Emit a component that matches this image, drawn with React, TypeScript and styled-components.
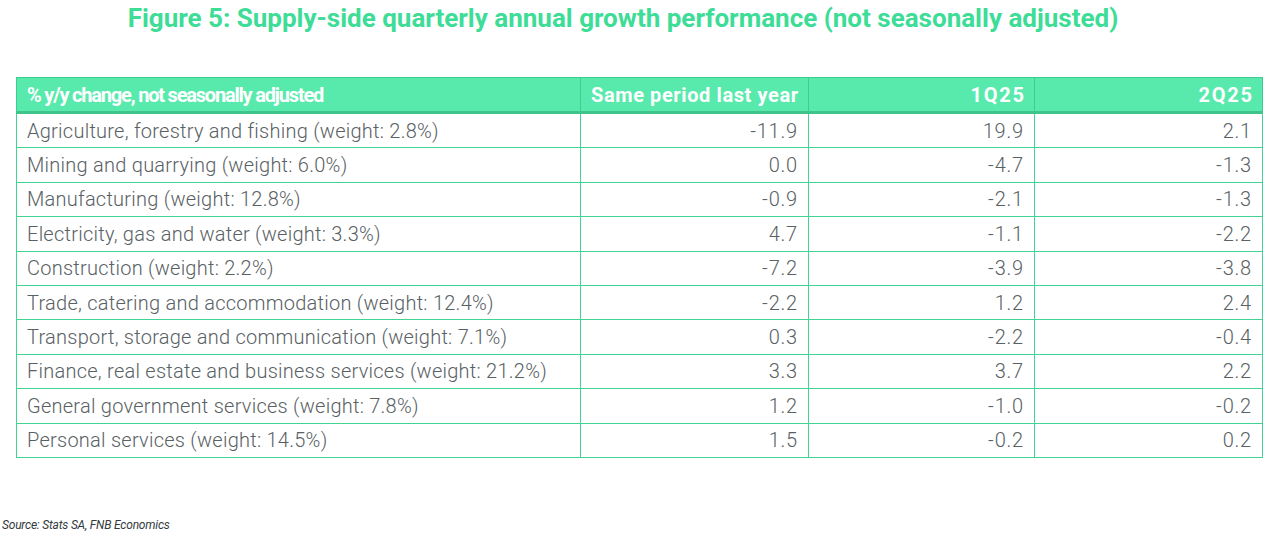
import styled, { createGlobalStyle } from 'styled-components'

const GlobalStyle = createGlobalStyle`
  html, body {
    margin: 0;
    padding: 0;
    background: #ffffff;
  }
  body {
    font-family: Roboto, "Liberation Sans", sans-serif;
  }
`

const Page = styled.div`
  width: 1280px;
  height: 536px;
  background: #fff;
  display: flex;
  flex-direction: column;
`

const Title = styled.h1`
  margin: 0;
  padding: 3px 34px 0 0;
  height: 72px;
  box-sizing: border-box;
  text-align: center;
  font-family: Roboto, "Liberation Sans", sans-serif;
  font-weight: 700;
  font-size: 26px;
  letter-spacing: 0;
  color: #3ddc97;
`

const TableWrap = styled.div`
  padding: 5px 0 0 16px;
`

const Table = styled.table`
  border-collapse: collapse;
  table-layout: fixed;
  width: 1246px;
`

const HeadCell = styled.th<{ $align?: 'left' | 'right'; $spacing: number }>`
  background: #58eaad;
  color: #ffffff;
  font-weight: 700;
  font-size: 20px;
  letter-spacing: ${p => p.$spacing}px;
  text-align: ${p => p.$align || 'right'};
  height: 33px;
  padding: 0 ${p => 10 - p.$spacing}px 0 10px;
  border: 1px solid #3fcc90;
  border-bottom: 3px solid #3fc48b;
  white-space: nowrap;
`

const Cell = styled.td<{ $label?: boolean }>`
  color: #586164;
  font-weight: 300;
  font-size: 20px;
  letter-spacing: ${p => (p.$label ? 0.25 : 0.8)}px;
  text-align: ${p => (p.$label ? 'left' : 'right')};
  height: 33.4px;
  padding: 0 ${p => (p.$label ? 10 : 10)}px 0 10px;
  border: 1px solid #3fd394;
  white-space: nowrap;
`

const Source = styled.div`
  margin-top: auto;
  padding: 0 0 4px 2px;
  font-size: 12px;
  font-style: italic;
  letter-spacing: -0.2px;
  color: #333a3d;
`

const rows: [string, string, string, string][] = [
  ['Agriculture, forestry and fishing (weight: 2.8%)', '-11.9', '19.9', '2.1'],
  ['Mining and quarrying (weight: 6.0%)', '0.0', '-4.7', '-1.3'],
  ['Manufacturing (weight: 12.8%)', '-0.9', '-2.1', '-1.3'],
  ['Electricity, gas and water (weight: 3.3%)', '4.7', '-1.1', '-2.2'],
  ['Construction (weight: 2.2%)', '-7.2', '-3.9', '-3.8'],
  ['Trade, catering and accommodation (weight: 12.4%)', '-2.2', '1.2', '2.4'],
  ['Transport, storage and communication (weight: 7.1%)', '0.3', '-2.2', '-0.4'],
  ['Finance, real estate and business services (weight: 21.2%)', '3.3', '3.7', '2.2'],
  ['General government services (weight: 7.8%)', '1.2', '-1.0', '-0.2'],
  ['Personal services (weight: 14.5%)', '1.5', '-0.2', '0.2'],
]

const App = () => {
  return (
    <Page>
      <GlobalStyle />
      <Title>Figure 5: Supply-side quarterly annual growth performance (not seasonally adjusted)</Title>
      <TableWrap>
        <Table>
          <colgroup>
            <col style={{ width: 564 }} />
            <col style={{ width: 228 }} />
            <col style={{ width: 226 }} />
            <col style={{ width: 228 }} />
          </colgroup>
          <thead>
            <tr>
              <HeadCell $align="left" $spacing={-1.2}>% y/y change, not seasonally adjusted</HeadCell>
              <HeadCell $spacing={0.6}>Same period last year</HeadCell>
              <HeadCell $spacing={1.8}>1Q25</HeadCell>
              <HeadCell $spacing={1.8}>2Q25</HeadCell>
            </tr>
          </thead>
          <tbody>
            {rows.map(r => (
              <tr key={r[0]}>
                <Cell $label>{r[0]}</Cell>
                <Cell>{r[1]}</Cell>
                <Cell>{r[2]}</Cell>
                <Cell>{r[3]}</Cell>
              </tr>
            ))}
          </tbody>
        </Table>
      </TableWrap>
      <Source>Source: Stats SA, FNB Economics</Source>
    </Page>
  )
}

export default App
